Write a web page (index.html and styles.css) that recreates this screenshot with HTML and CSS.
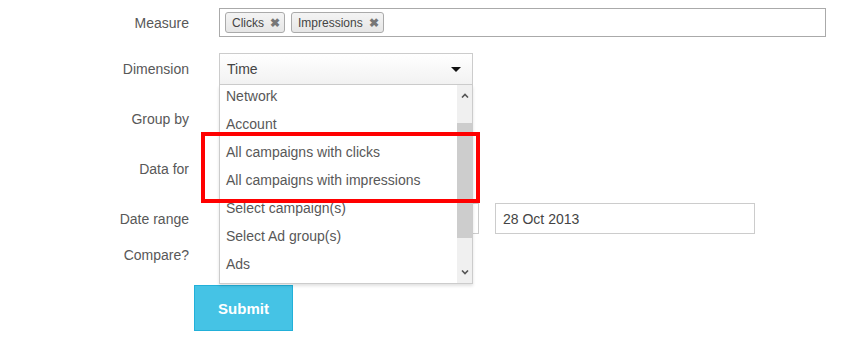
FILE: index.html
```html
<!DOCTYPE html>
<html lang="en">
<head>
    <meta charset="UTF-8">
    <title>Report builder</title>
    <link rel="stylesheet" href="styles.css">
</head>
<body>
    <form class="report-form">
        <div class="row row-measure">
            <label class="row-label">Measure</label>
            <div class="tag-input">
                <span class="tag">Clicks <span class="tag-close">&#10006;</span></span>
                <span class="tag">Impressions <span class="tag-close">&#10006;</span></span>
            </div>
        </div>

        <div class="row">
            <label class="row-label">Dimension</label>
            <div class="select-wrap">
                <div class="select-head">
                    <span>Time</span>
                    <span class="select-arrow"></span>
                </div>
                <div class="dropdown">
                    <ul class="dropdown-list">
                        <li>Network</li>
                        <li>Account</li>
                        <li>All campaigns with clicks</li>
                        <li>All campaigns with impressions</li>
                        <li>Select campaign(s)</li>
                        <li>Select Ad group(s)</li>
                        <li>Ads</li>
                    </ul>
                    <div class="scrollbar">
                        <div class="scroll-btn">
                            <svg width="8" height="5" viewBox="0 0 8 5"><polyline points="1,4.5 4,1.5 7,4.5" fill="none" stroke="#555" stroke-width="1.6"/></svg>
                        </div>
                        <div class="scroll-track">
                            <div class="scroll-thumb"></div>
                        </div>
                        <div class="scroll-btn">
                            <svg width="8" height="5" viewBox="0 0 8 5"><polyline points="1,0.5 4,3.5 7,0.5" fill="none" stroke="#555" stroke-width="1.6"/></svg>
                        </div>
                    </div>
                </div>
                <div class="highlight"></div>
            </div>
        </div>

        <div class="row">
            <label class="row-label">Group by</label>
        </div>

        <div class="row">
            <label class="row-label">Data for</label>
        </div>

        <div class="row row-date">
            <label class="row-label">Date range</label>
            <div class="date-inputs">
                <input class="text-input" type="text" value="">
                <input class="text-input" type="text" value="28 Oct 2013">
            </div>
        </div>

        <div class="row row-compare">
            <label class="row-label">Compare?</label>
        </div>

        <button type="submit" class="submit-btn">Submit</button>
    </form>
</body>
</html>
```

FILE: styles.css
```css
body {
    margin: 0;
    font-family: "Liberation Sans", Arial, sans-serif;
    font-size: 14px;
    color: #585858;
    background: #fff;
}
.report-form {
    padding-top: 8px;
}
.row {
    display: flex;
    align-items: center;
    height: 32px;
    margin-bottom: 18px;
}
.row-measure {
    height: 29px;
    margin-bottom: 16px;
}
.row-date {
    height: 31px;
    margin-bottom: 6px;
}
.row-compare {
    height: 30px;
    margin-bottom: 15px;
}
.row-label {
    width: 189px;
    flex: none;
    text-align: right;
    margin-right: 30px;
}
.tag-input {
    box-sizing: border-box;
    width: 607px;
    height: 29px;
    border: 1px solid #aaa;
    padding: 3px 5px;
    display: flex;
    gap: 6px;
}
.tag {
    box-sizing: border-box;
    height: 21px;
    display: flex;
    align-items: center;
    padding: 0 4px 0 6px;
    border: 1px solid #aaa;
    border-radius: 3px;
    background: linear-gradient(#f4f4f4, #e6e6e6);
    font-size: 12px;
    color: #444;
}
.tag-close {
    margin-left: 6px;
    font-size: 12px;
    color: #777;
    font-weight: bold;
}
.select-wrap {
    position: relative;
    width: 254px;
}
.select-head {
    box-sizing: border-box;
    height: 32px;
    border: 1px solid #ccc;
    background: linear-gradient(#fff, #f2f2f2);
    display: flex;
    align-items: center;
    justify-content: space-between;
    padding: 0 11px 0 7px;
    color: #444;
}
.select-arrow {
    width: 0;
    height: 0;
    border-left: 5px solid transparent;
    border-right: 5px solid transparent;
    border-top: 5px solid #111;
}
.dropdown {
    position: absolute;
    top: 32px;
    left: 0;
    right: 0;
    height: 199px;
    box-sizing: border-box;
    border: 1px solid #ccc;
    border-top: none;
    background: #fff;
    box-shadow: 0 2px 3px rgba(0, 0, 0, 0.12);
    display: flex;
    overflow: hidden;
    z-index: 2;
}
.dropdown-list {
    list-style: none;
    margin: -3px 0 0;
    padding: 0;
    flex: 1;
}
.dropdown-list li {
    height: 28px;
    line-height: 28px;
    padding-left: 6px;
    white-space: nowrap;
}
.scrollbar {
    width: 15px;
    flex: none;
    display: flex;
    flex-direction: column;
    background: #f0f0f0;
}
.scroll-btn {
    height: 21px;
    display: flex;
    align-items: center;
    justify-content: center;
}
.scroll-track {
    flex: 1;
    padding-top: 17px;
    padding-bottom: 24px;
}
.scroll-thumb {
    height: 100%;
    background: #cdcdcd;
}
.highlight {
    position: absolute;
    left: -18px;
    top: 79px;
    width: 271px;
    height: 63px;
    border: 4px solid #f00;
    z-index: 3;
}
.date-inputs {
    display: flex;
    gap: 16px;
}
.text-input {
    box-sizing: border-box;
    width: 260px;
    height: 31px;
    border: 1px solid #ccc;
    padding: 0 7px;
    font-family: inherit;
    font-size: 14px;
    color: #444;
}
.submit-btn {
    margin-left: 194px;
    width: 99px;
    height: 46px;
    border: 1px solid #22b0d9;
    background: #45c3e5;
    color: #fff;
    font-family: inherit;
    font-size: 15px;
    font-weight: bold;
}
```
